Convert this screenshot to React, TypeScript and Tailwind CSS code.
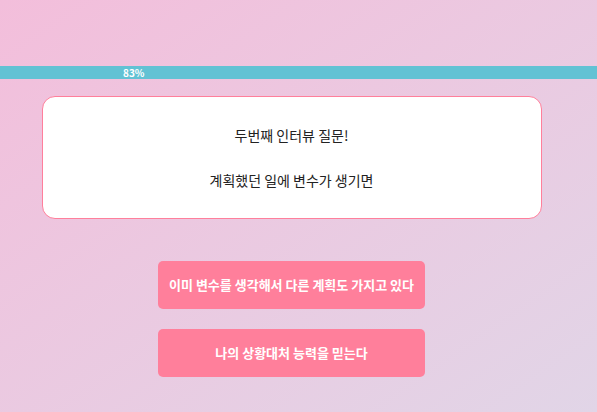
import React from 'react';

const ANSWERS = ['이미 변수를 생각해서 다른 계획도 가지고 있다', '나의 상황대처 능력을 믿는다'];

export default function App() {
  return (
    <div
      className="w-[597px] h-[412px] overflow-hidden bg-gradient-to-br from-[#f3bedb] to-[#e1d5e7] text-[#222222]"
      style={{ fontFamily: '"Noto Sans CJK KR", "Noto Sans", sans-serif' }}
    >
      {/* progress */}
      <div className="mt-[66px] h-[13px] w-full bg-[#62c2d4] flex items-center">
        <span className="ml-[123px] text-[10px] font-bold leading-none text-white">83%</span>
      </div>

      <div className="w-[583px] flex flex-col items-center">
        {/* question card */}
        <div className="mt-[17px] w-[500px] h-[123px] bg-white border border-[#ff7f9b] rounded-[13px] flex flex-col items-center justify-center gap-[25px] text-[14px]">
          <p className="leading-[20px]">두번째 인터뷰 질문!</p>
          <p className="leading-[20px]">계획했던 일에 변수가 생기면</p>
        </div>

        {/* answers */}
        <div className="mt-[42px] flex flex-col gap-[20px]">
          {ANSWERS.map((a, i) => (
            <button
              key={i}
              className="w-[267px] h-[48px] rounded-[5px] bg-[#ff7f9b] text-white text-[13px] font-bold flex items-center justify-center"
            >
              {a}
            </button>
          ))}
        </div>
      </div>
    </div>
  );
}
